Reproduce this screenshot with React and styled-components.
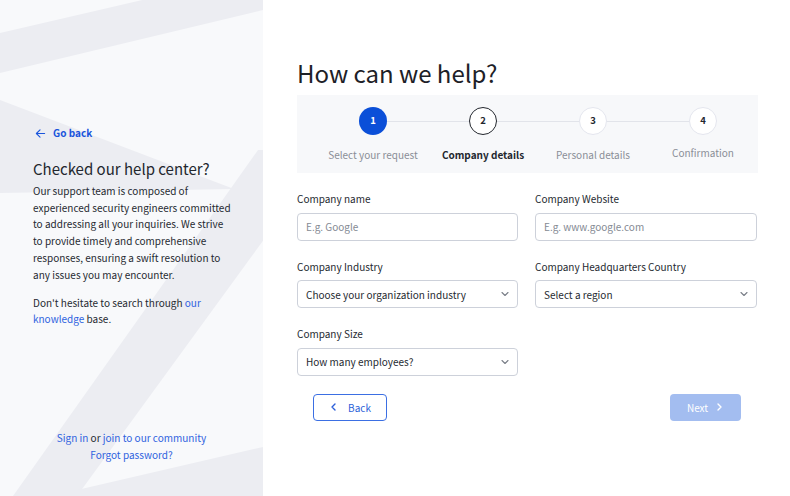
import React from "react";
import styled, { createGlobalStyle } from "styled-components";

const Global = createGlobalStyle`
  html, body { margin: 0; padding: 0; background: #ffffff; }
  body { font-family: "Noto Sans CJK SC", Lato, sans-serif; color: #262a31; }
  * { box-sizing: border-box; }
`;

const Page = styled.div`
  display: flex;
  width: 790px;
  height: 496px;
  overflow: hidden;
`;

const Side = styled.aside`
  position: relative;
  width: 263px;
  flex: none;
  height: 100%;
  background: #f8f9fb;
  display: flex;
  flex-direction: column;
  padding: 125px 30px 33px 33px;
  overflow: hidden;
`;

const Deco = styled.svg`
  position: absolute;
  inset: 0;
  width: 263px;
  height: 496px;
  z-index: 0;
`;

const SideContent = styled.div`
  position: relative;
  z-index: 1;
  display: flex;
  flex-direction: column;
  flex: 1;
`;

const BackLink = styled.a`
  display: flex;
  align-items: center;
  gap: 7px;
  color: #1a55dc;
  font-size: 10px;
  line-height: 16px;
  font-weight: 700;
  text-decoration: none;
  padding-left: 2px;
`;

const SideTitle = styled.h2`
  margin: 18px 0 4px;
  font-size: 15px;
  font-weight: 400;
  color: #23272e;
  line-height: 20px;
`;

const SideText = styled.p`
  margin: 0 0 11.5px;
  font-size: 10px;
  line-height: 16.7px;
  color: #262a31;
`;

const Link = styled.a`
  color: #2f63e0;
  text-decoration: none;
`;

const SideFooter = styled.div`
  margin-top: auto;
  text-align: center;
  font-size: 10px;
  line-height: 16.5px;
  color: #262a31;
  margin-left: -33px;
  margin-right: -30px;
`;

const Main = styled.main`
  flex: 1;
  padding: 56px 33px 0 34px;
  display: flex;
  flex-direction: column;
`;

const Title = styled.h1`
  margin: 0 0 5px;
  font-size: 24px;
  font-weight: 400;
  color: #1d2127;
  line-height: 34px;
`;

const Stepper = styled.div`
  background: #f7f8fa;
  height: 78px;
  display: grid;
  grid-template-columns: repeat(4, 110px);
  padding-left: 21px;
  padding-top: 12px;
`;

const Step = styled.div`
  position: relative;
  display: flex;
  flex-direction: column;
  align-items: center;
`;

const Connector = styled.span`
  position: absolute;
  top: 14px;
  left: 50%;
  width: 110px;
  height: 1px;
  background: #e2e4ea;
  z-index: 0;
`;

const Circle = styled.span`
  position: relative;
  z-index: 1;
  width: 28px;
  height: 28px;
  border-radius: 50%;
  display: flex;
  align-items: center;
  justify-content: center;
  font-size: 9.5px;
  line-height: 1;
  font-weight: 700;
  background: ${(p) => (p.$state === "done" ? "#0b4fd8" : "#ffffff")};
  color: ${(p) => (p.$state === "done" ? "#ffffff" : "#23272e")};
  border: ${(p) =>
    p.$state === "done"
      ? "none"
      : p.$state === "active"
      ? "1.5px solid #23272e"
      : "1.5px solid #e4e6ee"};
`;

const StepLabel = styled.span`
  margin-top: ${(p) => (p.$up ? "10px" : "12px")};
  font-size: 10px;
  line-height: 15px;
  white-space: nowrap;
  font-weight: ${(p) => (p.$active ? 700 : 400)};
  color: ${(p) => (p.$active ? "#23272e" : "#8a8e97")};
`;

const Form = styled.div`
  margin-top: 18px;
  display: grid;
  grid-template-columns: 221px 222px;
  column-gap: 17px;
  row-gap: 18px;
`;

const Field = styled.label`
  display: flex;
  flex-direction: column;
  gap: 6.5px;
`;

const Label = styled.span`
  font-size: 10px;
  color: #262a31;
  line-height: 15px;
`;

const Input = styled.input`
  height: 28px;
  border: 1px solid #cdd1da;
  border-radius: 4px;
  padding: 0 8px;
  font-family: inherit;
  font-size: 10px;
  color: #262a31;
  background: #fff;
  outline: none;
  &::placeholder { color: #858a94; }
`;

const Select = styled.div`
  height: 28px;
  border: 1px solid #cdd1da;
  border-radius: 4px;
  padding: 0 7px 0 8px;
  display: flex;
  align-items: center;
  justify-content: space-between;
  font-size: 10px;
  color: #262a31;
  background: #fff;
`;

const Actions = styled.div`
  display: flex;
  justify-content: space-between;
  margin-top: 18px;
  padding: 0 17px 0 16px;
`;

const Button = styled.button`
  height: 27px;
  border-radius: 4px;
  display: flex;
  align-items: center;
  justify-content: center;
  gap: ${(p) => p.$gap}px;
  font-family: inherit;
  font-size: 10px;
  cursor: pointer;
  width: ${(p) => p.$w}px;
  background: ${(p) => (p.$primary ? "#a3bdf0" : "#ffffff")};
  color: ${(p) => (p.$primary ? "#ffffff" : "#2c5fd9")};
  border: ${(p) => (p.$primary ? "none" : "1px solid #3b6fe3")};
`;

const Chevron = ({ dir = "down", color = "#7a7f88", size = 10, w = 1.1 }) => {
  const d =
    dir === "down"
      ? "M2 3.5 L5 6.5 L8 3.5"
      : dir === "left"
      ? "M6 2 L3 5 L6 8"
      : "M4 2 L7 5 L4 8";
  return (
    <svg width={size} height={size} viewBox="0 0 10 10" fill="none">
      <path d={d} stroke={color} strokeWidth={w} strokeLinecap="round" strokeLinejoin="round" />
    </svg>
  );
};

const ArrowLeft = () => (
  <svg width="11" height="11" viewBox="0 0 12 12" fill="none">
    <path d="M10.5 6 H1.5 M5.5 2 L1.5 6 L5.5 10" stroke="#1a55dc" strokeWidth="1.2" strokeLinecap="round" strokeLinejoin="round" />
  </svg>
);

const steps = [
  { n: 1, label: "Select your request", state: "done" },
  { n: 2, label: "Company details", state: "active" },
  { n: 3, label: "Personal details", state: "todo" },
  { n: 4, label: "Confirmation", state: "todo", up: true },
];

export default function App() {
  return (
    <>
      <Global />
      <Page>
        <Side>
          <Deco viewBox="0 0 263 496" preserveAspectRatio="none">
            <polygon points="0,33 263,-28 263,10 0,73" fill="#ecedf2" />
            <polygon points="0,100 234,189 0,193" fill="#ecedf2" />
            <polygon points="258,150 300,150 300,190 77,496 13,496" fill="#ecedf2" />
            <polygon points="77,490 263,447 263,496 77,496" fill="#ecedf2" />
          </Deco>
          <SideContent>
            <BackLink href="#">
              <ArrowLeft />
              Go back
            </BackLink>
            <SideTitle>Checked our help center?</SideTitle>
            <SideText>
              Our support team is composed of experienced security engineers committed to
              addressing all your inquiries. We strive to provide timely and comprehensive
              responses, ensuring a swift resolution to any issues you may encounter.
            </SideText>
            <SideText>
              Don't hesitate to search through <Link href="#">our knowledge</Link> base.
            </SideText>
            <SideFooter>
              <div>
                <Link href="#">Sign in</Link> or <Link href="#">join to our community</Link>
              </div>
              <div>
                <Link href="#">Forgot password?</Link>
              </div>
            </SideFooter>
          </SideContent>
        </Side>
        <Main>
          <Title>How can we help?</Title>
          <Stepper>
            {steps.map((s, i) => (
              <Step key={s.n}>
                {i < steps.length - 1 && <Connector />}
                <Circle $state={s.state}>{s.n}</Circle>
                <StepLabel $active={s.state === "active"} $up={s.up}>
                  {s.label}
                </StepLabel>
              </Step>
            ))}
          </Stepper>
          <Form>
            <Field>
              <Label>Company name</Label>
              <Input placeholder="E.g. Google" />
            </Field>
            <Field>
              <Label>Company Website</Label>
              <Input placeholder="E.g. www.google.com" />
            </Field>
            <Field>
              <Label>Company Industry</Label>
              <Select>
                Choose your organization industry
                <Chevron />
              </Select>
            </Field>
            <Field>
              <Label>Company Headquarters Country</Label>
              <Select>
                Select a region
                <Chevron />
              </Select>
            </Field>
            <Field>
              <Label>Company Size</Label>
              <Select>
                How many employees?
                <Chevron />
              </Select>
            </Field>
          </Form>
          <Actions>
            <Button $w={74} $gap={9}>
              <Chevron dir="left" color="#2c5fd9" w={1.4} />
              Back
            </Button>
            <Button $primary $w={71} $gap={6}>
              Next
              <Chevron dir="right" color="#ffffff" w={1.4} />
            </Button>
          </Actions>
        </Main>
      </Page>
    </>
  );
}
